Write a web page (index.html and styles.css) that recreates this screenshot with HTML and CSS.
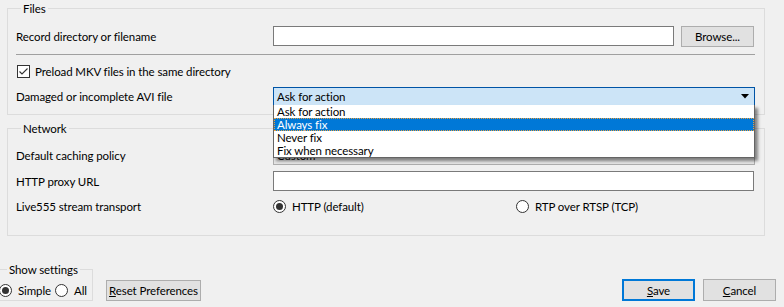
FILE: index.html
```html
<!DOCTYPE html>
<html>
<head>
<meta charset="utf-8">
<link rel="stylesheet" href="styles.css">
</head>
<body>
<div class="prefs">
  <section class="group files">
    <div class="group-title">Files</div>
    <div class="row row-record">
      <span class="lbl">Record directory or filename</span>
      <div class="textbox tb-record"></div>
      <div class="btn btn-browse">Browse...</div>
    </div>
    <div class="sep"></div>
    <div class="row row-check">
      <span class="checkbox"><svg width="11" height="11" viewBox="0 0 11 11"><path d="M1.5 5.5 L4 8 L9.5 2.5" fill="none" stroke="#333" stroke-width="1.1"/></svg></span>
      <span class="check-text">Preload MKV files in the same directory</span>
    </div>
    <div class="row row-avi">
      <span class="lbl">Damaged or incomplete AVI file</span>
      <div class="combo combo-open">
        <span class="combo-text">Ask for action</span>
        <svg class="arrow" width="8" height="5" viewBox="0 0 8 5"><path d="M0 0 H8 L4 4.5 Z" fill="#000"/></svg>
        <ul class="droplist">
          <li>Ask for action</li>
          <li class="sel">Always fix</li>
          <li>Never fix</li>
          <li>Fix when necessary</li>
        </ul>
      </div>
    </div>
  </section>

  <section class="group network">
    <div class="group-title">Network</div>
    <div class="row row-cache">
      <span class="lbl">Default caching policy</span>
      <div class="combo combo-plain"><span class="combo-text">Custom</span></div>
    </div>
    <div class="row row-proxy">
      <span class="lbl">HTTP proxy URL</span>
      <div class="textbox tb-proxy"></div>
    </div>
    <div class="row row-live">
      <span class="lbl">Live555 stream transport</span>
      <span class="opt opt-http"><span class="radio on"></span>HTTP (default)</span>
      <span class="opt"><span class="radio"></span>RTP over RTSP (TCP)</span>
    </div>
  </section>
</div>

<footer class="footer">
  <section class="group show">
    <div class="group-title">Show settings</div>
    <div class="show-row">
      <span class="opt opt-simple"><span class="radio on"></span>Simple</span>
      <span class="opt"><span class="radio"></span>All</span>
    </div>
  </section>
  <div class="btn btn-reset"><span><u>R</u>eset Preferences</span></div>
  <div class="btn btn-save"><span><u>S</u>ave</span></div>
  <div class="btn btn-cancel"><span><u>C</u>ancel</span></div>
</footer>
</body>
</html>
```

FILE: styles.css
```css
html, body {
  margin: 0;
  padding: 0;
}
body {
  width: 784px;
  height: 307px;
  overflow: hidden;
  background: #f0f0f0;
  color: #000;
  font-family: "Lato", "Noto Sans", sans-serif;
  font-size: 11.5px;
  letter-spacing: -0.1px;
  line-height: 15px;
  white-space: nowrap;
}
.prefs {
  padding: 8px 19px 0 7px;
}
.group {
  border: 1px solid #dcdcdc;
  box-sizing: border-box;
}
.group-title {
  width: fit-content;
  margin: -8px 0 0 5px;
  padding: 0 2px;
  background: #f0f0f0;
  line-height: 15px;
}
.files {
  padding: 0 0 8px 8px;
}
.row {
  display: flex;
  align-items: center;
}
.lbl {
  flex: 0 0 257px;
}
.row-record {
  margin-top: 10px;
  height: 20px;
}
.textbox {
  box-sizing: border-box;
  height: 20px;
  background: #fff;
  border: 1px solid #7a7a7a;
}
.tb-record {
  width: 401px;
}
.btn {
  box-sizing: border-box;
  display: flex;
  align-items: center;
  justify-content: center;
  flex-shrink: 0;
  background: #e1e1e1;
  border: 1px solid #adadad;
}
.btn-browse {
  width: 73px;
  height: 21px;
  margin-left: 7px;
}
.sep {
  margin: 8px 9px 0 0;
  border-top: 1px solid #a0a0a0;
}
.row-check {
  margin-top: 10px;
  height: 13px;
  padding-left: 1px;
}
.checkbox {
  box-sizing: border-box;
  width: 13px;
  height: 13px;
  border: 1px solid #333;
  background: #fff;
  display: flex;
}
.check-text {
  margin-left: 5px;
}
.row-avi {
  margin-top: 9px;
  height: 19px;
}
.combo {
  position: relative;
  box-sizing: border-box;
  width: 482px;
  height: 19px;
  display: flex;
  align-items: center;
  padding: 0 5px 0 3px;
}
.combo-open {
  background: #cce4f7;
  border: 1px solid #0054a6;
}
.combo-plain {
  height: 20px;
  background: #e5e5e5;
  border: 1px solid #adadad;
}
.combo-text {
  flex: 1;
}
.droplist {
  position: absolute;
  top: 100%;
  left: -1px;
  width: 482px;
  box-sizing: border-box;
  margin: 0;
  padding: 0;
  list-style: none;
  background: #fff;
  border: 1px solid #646464;
  border-top: 0;
  box-shadow: 3px 3px 3px rgba(0, 0, 0, 0.45);
  z-index: 5;
}
.droplist li {
  height: 13px;
  line-height: 13px;
  padding-left: 3px;
  box-sizing: border-box;
}
.droplist li.sel {
  background: #0078d7;
  color: #fff;
  outline: 1px dotted #e8a040;
  outline-offset: -1px;
}
.network {
  margin-top: 13px;
  padding: 0 0 21px 8px;
}
.row-cache {
  margin-top: 9px;
  height: 20px;
}
.row-proxy {
  margin-top: 6px;
  height: 20px;
}
.tb-proxy {
  width: 481px;
}
.row-live {
  margin-top: 8px;
  height: 15px;
}
.opt {
  display: inline-flex;
  align-items: center;
  gap: 6px;
  flex-shrink: 0;
}
.opt-http {
  width: 243px;
}
.radio {
  box-sizing: border-box;
  width: 13px;
  height: 13px;
  border: 1px solid #333;
  border-radius: 50%;
  background: #fff;
  display: inline-flex;
  align-items: center;
  justify-content: center;
  flex-shrink: 0;
}
.radio.on::after {
  content: "";
  width: 7px;
  height: 7px;
  border-radius: 50%;
  background: #333;
}
.footer {
  margin-top: 33px;
  display: flex;
  align-items: flex-end;
  padding-right: 8px;
}
.show {
  flex: 0 0 101px;
  width: 101px;
  margin-left: -8px;
  padding: 0 0 3px 6px;
}
.show .group-title {
  margin-left: 8px;
}
.show-row {
  margin-top: 7px;
  height: 13px;
  display: flex;
  align-items: center;
}
.opt-simple {
  width: 56px;
}
.btn-reset {
  width: 95px;
  height: 21px;
  margin-left: 13px;
}
.btn-save {
  width: 73px;
  height: 22px;
  margin-left: auto;
  border: 2px solid #0078d7;
}
.btn-cancel {
  width: 73px;
  height: 22px;
  margin-left: 8px;
}
```
